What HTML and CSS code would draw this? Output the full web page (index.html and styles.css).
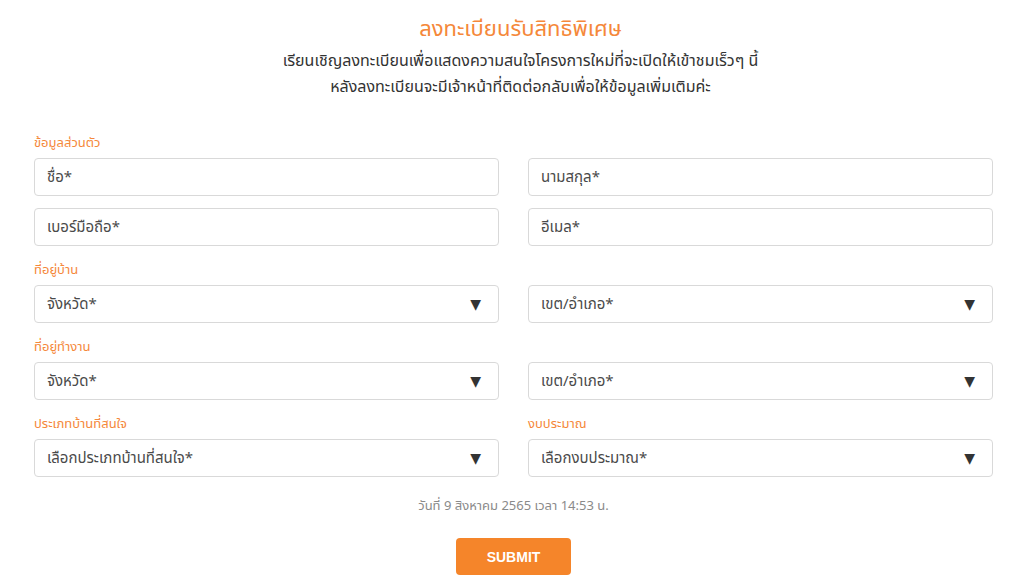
FILE: index.html
```html
<!DOCTYPE html>
<html lang="th">
<head>
<meta charset="utf-8">
<title>ลงทะเบียนรับสิทธิพิเศษ</title>
<link rel="stylesheet" href="styles.css">
</head>
<body>
<main class="page">
  <header class="head">
    <h1 class="title">ลงทะเบียนรับสิทธิพิเศษ</h1>
    <p class="subtitle">เรียนเชิญลงทะเบียนเพื่อแสดงความสนใจโครงการใหม่ที่จะเปิดให้เข้าชมเร็วๆ นี้<br>หลังลงทะเบียนจะมีเจ้าหน้าที่ติดต่อกลับเพื่อให้ข้อมูลเพิ่มเติมค่ะ</p>
  </header>

  <form class="form">
    <section class="group first">
      <div class="group-title">ข้อมูลส่วนตัว</div>
      <div class="grid">
        <div class="field">ชื่อ*</div>
        <div class="field">นามสกุล*</div>
        <div class="field">เบอร์มือถือ*</div>
        <div class="field">อีเมล*</div>
      </div>
    </section>

    <section class="group">
      <div class="group-title">ที่อยู่บ้าน</div>
      <div class="grid">
        <div class="field select"><span>จังหวัด*</span><span class="arrow">▼</span></div>
        <div class="field select"><span>เขต/อำเภอ*</span><span class="arrow">▼</span></div>
      </div>
    </section>

    <section class="group">
      <div class="group-title">ที่อยู่ทำงาน</div>
      <div class="grid">
        <div class="field select"><span>จังหวัด*</span><span class="arrow">▼</span></div>
        <div class="field select"><span>เขต/อำเภอ*</span><span class="arrow">▼</span></div>
      </div>
    </section>

    <section class="group grid">
      <div class="col">
        <div class="group-title">ประเภทบ้านที่สนใจ</div>
        <div class="field select"><span>เลือกประเภทบ้านที่สนใจ*</span><span class="arrow">▼</span></div>
      </div>
      <div class="col">
        <div class="group-title">งบประมาณ</div>
        <div class="field select"><span>เลือกงบประมาณ*</span><span class="arrow">▼</span></div>
      </div>
    </section>

    <p class="date">วันที่ 9 สิงหาคม 2565 เวลา 14:53 น.</p>
    <div class="actions"><button type="button" class="submit">SUBMIT</button></div>
  </form>
</main>
</body>
</html>
```

FILE: styles.css
```css
html, body {
  margin: 0;
  padding: 0;
  background: #ffffff;
}
body {
  font-family: "Noto Sans", "Noto Sans Thai", "Liberation Sans", sans-serif;
  color: #333333;
}
.page {
  width: 959px;
  margin-left: 34px;
}
.head {
  text-align: center;
  padding-top: 12px;
  padding-left: 14px;
}
.title {
  margin: 0;
  font-size: 22px;
  line-height: 30px;
  font-weight: 400;
  color: #f5883a;
}
.subtitle {
  margin: 5px 0 0;
  font-size: 16px;
  line-height: 26px;
  color: #333333;
}
.form {
  margin-top: 35px;
}
.group {
  margin-top: 15px;
}
.group.first {
  margin-top: 0;
}
.group-title {
  font-size: 13px;
  line-height: 16px;
  height: 16px;
  color: #f5883a;
  margin-bottom: 8px;
}
.grid {
  display: grid;
  grid-template-columns: 1fr 1fr;
  column-gap: 29px;
  row-gap: 12px;
}
.col {
  display: flex;
  flex-direction: column;
}
.field {
  box-sizing: border-box;
  height: 38px;
  border: 1px solid #d9d9d9;
  border-radius: 4px;
  padding: 0 12px;
  display: flex;
  align-items: center;
  justify-content: space-between;
  font-size: 15px;
  color: #4a4a4a;
  background: #fff;
}
.arrow {
  font-size: 14px;
  color: #333;
  margin-right: 5px;
  font-family: "DejaVu Sans", sans-serif;
}
.date {
  margin: 19px 0 0;
  text-align: center;
  font-size: 13px;
  line-height: 18px;
  color: #8a8a8a;
}
.actions {
  display: flex;
  justify-content: center;
  margin-top: 24px;
}
.submit {
  width: 115px;
  height: 37px;
  border: none;
  border-radius: 4px;
  background: #f5852a;
  color: #ffffff;
  font-family: "Liberation Sans", sans-serif;
  font-size: 14px;
  font-weight: 700;
  cursor: pointer;
}
```
